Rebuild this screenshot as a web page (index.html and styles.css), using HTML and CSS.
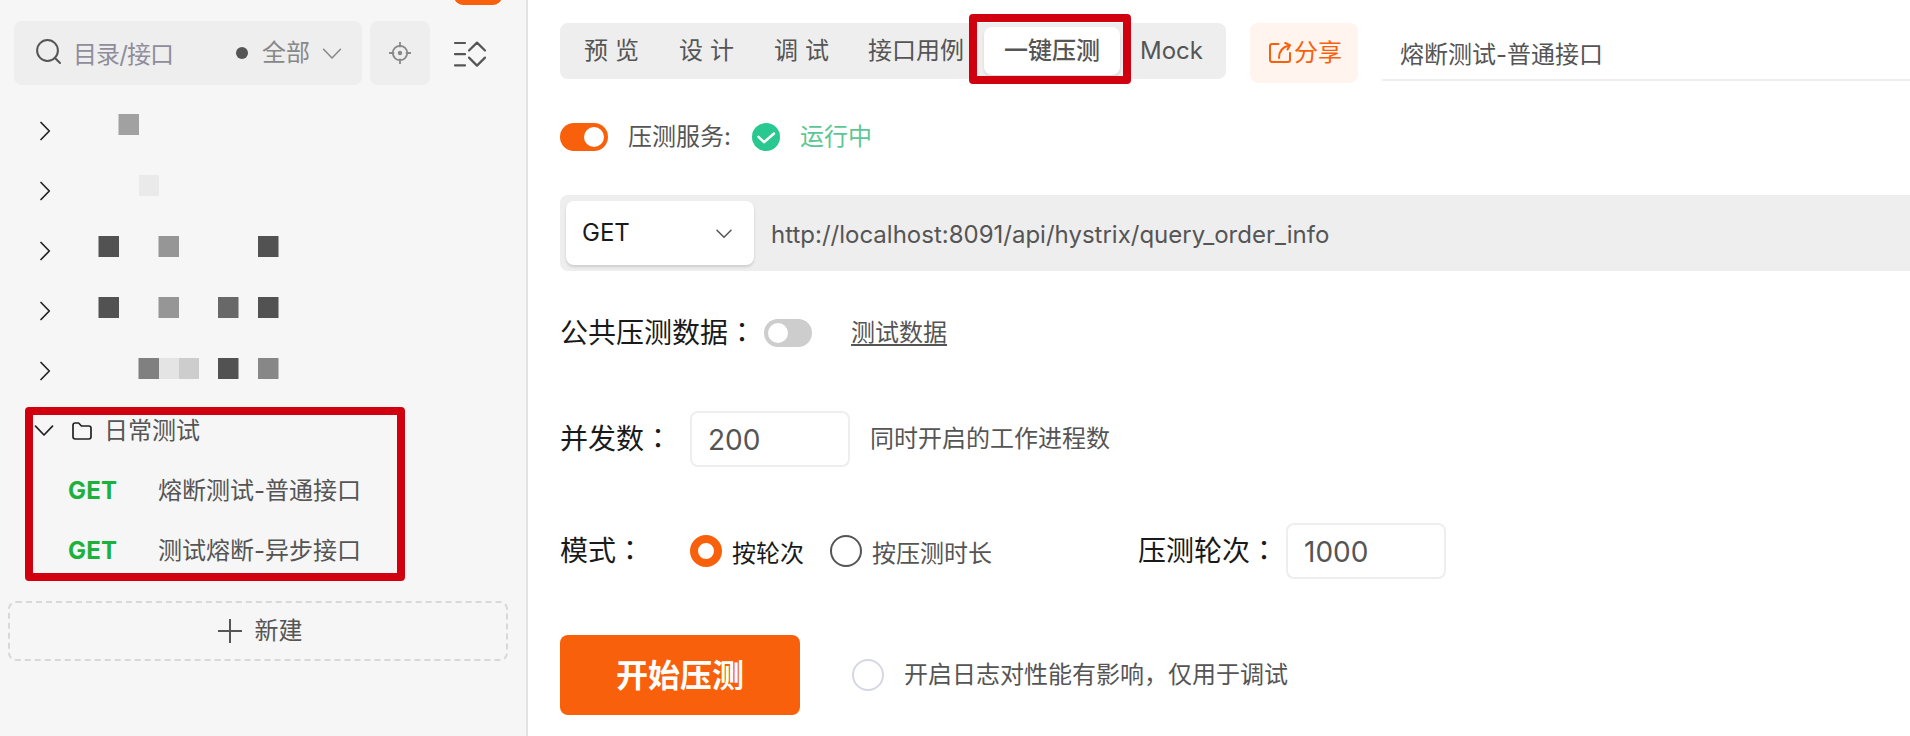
FILE: index.html
```html
<!DOCTYPE html>
<html lang="zh-CN">
<head>
<meta charset="utf-8">
<title>一键压测</title>
<link rel="stylesheet" href="styles.css">
</head>
<body>
<div class="app">
  <aside class="sidebar">
    <span class="top-tab"></span>
    <div class="toolbar">
      <div class="search">
        <svg class="search-icon" width="26" height="26" viewBox="0 0 26 26"><circle cx="11.5" cy="11.5" r="10.4"/><path d="M18.7 18.7 24 24"/></svg>
        <span class="search-hint">目录/接口</span>
        <span class="dot"></span>
        <span class="filter">全部</span>
        <svg class="filter-arrow" width="20" height="12" viewBox="0 0 20 12"><path d="M1.5 1.2 10 10 18.5 1.2"/></svg>
      </div>
      <div class="locate">
        <svg width="22" height="22" viewBox="0 0 22 22"><circle cx="11" cy="11" r="7.2"/><path d="M11 .5v4M11 17.5v4M.5 11h4M17.5 11h4"/><circle class="fill" cx="11" cy="11" r="2.2"/></svg>
      </div>
      <svg class="expand" width="34" height="28" viewBox="0 0 34 28"><path d="M2 3h10M2 14.2h10M2 25.4h10M16 10.5 24 2.6l8 7.9M16 17.6l8 8 8-8"/></svg>
    </div>
    <div class="tree">
      <div class="node"><svg class="caret" width="12" height="20" viewBox="0 0 12 20"><path d="M2 1.5 10.3 10 2 18.5"/></svg></div>
      <div class="node"><svg class="caret" width="12" height="20" viewBox="0 0 12 20"><path d="M2 1.5 10.3 10 2 18.5"/></svg></div>
      <div class="node"><svg class="caret" width="12" height="20" viewBox="0 0 12 20"><path d="M2 1.5 10.3 10 2 18.5"/></svg></div>
      <div class="node"><svg class="caret" width="12" height="20" viewBox="0 0 12 20"><path d="M2 1.5 10.3 10 2 18.5"/></svg></div>
      <div class="node"><svg class="caret" width="12" height="20" viewBox="0 0 12 20"><path d="M2 1.5 10.3 10 2 18.5"/></svg></div>
      <svg class="mosaic" width="182" height="266" viewBox="0 0 182 266">
        <rect x="20.5" y="0" width="20.5" height="21" fill="#a1a1a1"/>
        <rect x="41" y="61" width="20" height="21" fill="#eaeaea"/>
        <rect x="0.5" y="122" width="20.5" height="21" fill="#525252"/>
        <rect x="60.5" y="122" width="20.5" height="21" fill="#969696"/>
        <rect x="160" y="122" width="20.5" height="21" fill="#525252"/>
        <rect x="0.5" y="183" width="20.5" height="21" fill="#525252"/>
        <rect x="60.5" y="183" width="20.5" height="21" fill="#969696"/>
        <rect x="120" y="183" width="20.5" height="21" fill="#686868"/>
        <rect x="160" y="183" width="20.5" height="21" fill="#525252"/>
        <rect x="40.5" y="244" width="20.5" height="21" fill="#808080"/>
        <rect x="61" y="244" width="20" height="21" fill="#e4e4e4"/>
        <rect x="81" y="244" width="20" height="21" fill="#cdcdcd"/>
        <rect x="120" y="244" width="20.5" height="21" fill="#525252"/>
        <rect x="160" y="244" width="20.5" height="21" fill="#878787"/>
      </svg>
      <div class="node folder">
        <svg width="20" height="12" viewBox="0 0 20 12"><path d="M1.5 1.2 10 10 18.5 1.2"/></svg>
        <svg class="folder-icon" width="20" height="18" viewBox="0 0 20 18"><path d="M1 3.2Q1 1 3.2 1H6.6L9.4 4H16.8Q19 4 19 6.2V14.8Q19 17 16.8 17H3.2Q1 17 1 14.8Z"/></svg>
        <span>日常测试</span>
      </div>
      <div class="node api"><b class="verb">GET</b><span>熔断测试-普通接口</span></div>
      <div class="node api"><b class="verb">GET</b><span>测试熔断-异步接口</span></div>
      <span class="mark mark-tree"></span>
    </div>
    <div class="create">
      <svg width="24" height="24" viewBox="0 0 24 24"><path d="M12 0v24M0 12h24"/></svg>
      <span>新建</span>
    </div>
  </aside>

  <main class="main">
    <header class="head">
      <nav class="tabs">
        <span class="tab spaced">预览</span>
        <span class="tab spaced">设计</span>
        <span class="tab spaced">调试</span>
        <span class="tab cases">接口用例</span>
        <span class="tab active">一键压测<i class="mark mark-tab"></i></span>
        <span class="tab">Mock</span>
      </nav>
      <div class="share">
        <svg width="24" height="22" viewBox="0 0 24 22"><path d="M10.5 2H4.2Q2 2 2 4.2V17.8Q2 20 4.2 20H20Q22 20 22 17.8V11"/><path d="M11 16C11 9 14.5 5 21 3.5M17.2 1 22 3.2 19.5 7.5"/></svg>
        <span>分享</span>
      </div>
      <div class="title">熔断测试-普通接口</div>
    </header>

    <div class="service">
      <span class="switch on"></span>
      <span class="service-label">压测服务:</span>
      <svg width="28" height="28" viewBox="0 0 28 28"><circle cx="14" cy="14" r="14"/><path d="M6.5 13.8 12 19.2 22 10.5"/></svg>
      <span class="running">运行中</span>
    </div>

    <div class="urlbar">
      <div class="method"><span>GET</span><svg width="16" height="10" viewBox="0 0 16 10"><path d="M1 1.2 8 8.2 15 1.2"/></svg></div>
      <span class="url">http://localhost:8091/api/hystrix/query_order_info</span>
    </div>

    <div class="row data">
      <span class="label">公共压测数据<span class="colon" lang="zh-TW">：</span></span>
      <span class="switch"></span>
      <a class="link">测试数据</a>
    </div>

    <div class="row workers">
      <span class="label fixed">并发数<span class="colon" lang="zh-TW">：</span></span>
      <span class="input">200</span>
      <span class="hint">同时开启的工作进程数</span>
    </div>

    <div class="row mode">
      <span class="label fixed">模式<span class="colon" lang="zh-TW">：</span></span>
      <span class="radio checked"></span><span class="option chosen">按轮次</span>
      <span class="radio"></span><span class="option">按压测时长</span>
      <span class="label rounds">压测轮次<span class="colon" lang="zh-TW">：</span></span>
      <span class="input">1000</span>
    </div>

    <div class="row run">
      <span class="start">开始压测</span>
      <span class="radio pale"></span>
      <span class="note">开启日志对性能有影响，仅用于调试</span>
    </div>
  </main>
</div>
</body>
</html>
```
FILE: styles.css
```css
* { box-sizing: border-box; }
body {
  margin: 0;
  font-family: Inter, "Noto Sans CJK SC", sans-serif;
  font-size: 24px;
  line-height: 36px;
  color: #555;
  background: #fff;
}
svg { display: block; flex: none; fill: none; stroke: #555; stroke-width: 2; stroke-linecap: round; stroke-linejoin: round; }
span, a { white-space: nowrap; }
.app { display: flex; width: 1910px; height: 736px; overflow: hidden; }

.sidebar { position: relative; flex: none; width: 528px; background: #f6f6f6; border-right: 2px solid #e2e2e2; }
.top-tab { position: absolute; left: 454px; top: -20px; width: 48px; height: 25px; border-radius: 9px; background: #f8600b; }
.toolbar { display: flex; align-items: center; padding: 21px 0 0 14px; }
.search { display: flex; align-items: center; width: 348px; height: 64px; padding-left: 22px; border-radius: 8px; background: #eee; }
.search-icon { margin-top: -2px; }
.search-hint { width: 162px; margin: 4px 0 0 11px; color: #8f8d9b; letter-spacing: -0.9px; }
.dot { width: 12px; height: 12px; margin-left: 1px; border-radius: 50%; background: #555; }
.filter { margin: 0 12px 0 14px; color: #888; }
.filter-arrow { margin-top: 2px; stroke: #888; stroke-width: 1.5; }
.locate { display: flex; align-items: center; justify-content: center; width: 60px; height: 64px; margin-left: 8px; border-radius: 8px; background: #eee; }
.locate svg { stroke: #888; stroke-width: 1.8; }
.locate .fill { fill: #888; stroke: none; }
.expand { margin: 2px 0 0 23px; stroke-width: 2.2; }

.tree { position: relative; padding-top: 16px; }
.node { display: flex; align-items: center; height: 60px; padding-left: 39px; }
.node svg { stroke: #222; stroke-width: 1.7; }
.mosaic { position: absolute; left: 98px; top: 29px; stroke: none; }
.folder { padding-left: 34px; }
.folder .folder-icon { margin: 0 12px 0 18px; }
.api { padding-left: 68px; }
.verb { width: 90px; color: #1bb13c; letter-spacing: 0.2px; }
.mark { position: absolute; border: 8px solid #d0000f; border-radius: 4px; }
.mark-tree { left: 25px; top: 322px; width: 380px; height: 174px; }
.create { display: flex; align-items: center; justify-content: center; gap: 13px; width: 500px; height: 60px; margin: 20px 0 0 8px; padding-left: 4px; border: 2px dashed #d8d8d8; border-radius: 8px; }
.create svg { stroke-linecap: butt; }

.main { flex: 1; min-width: 0; padding: 23px 0 0 32px; }
.head { display: flex; align-items: flex-start; height: 60px; }
.tabs { display: flex; width: 666px; height: 56px; padding: 4px; border-radius: 8px; background: #eee; }
.tab { flex: none; padding: 6px 20px; }
.tab.spaced { width: 95px; letter-spacing: 7px; }
.tab.cases { margin-left: -1px; }
.tab.active { position: relative; font-weight: 500; border-radius: 8px; background: #fff; box-shadow: 0 2px 3px rgba(0,0,0,.1); }
.mark-tab { left: -15px; top: -13px; width: 162px; height: 70px; }
.share { display: flex; align-items: center; justify-content: center; gap: 2px; width: 108px; height: 60px; margin-left: 24px; padding-left: 2px; border-radius: 8px; color: #f8600b; background: #fff5ee; }
.share svg { stroke: #f8600b; }
.title { flex: 1; height: 58px; margin-left: 24px; padding: 14px 0 0 18px; border-bottom: 2px solid #eee; }

.service { display: flex; align-items: center; height: 28px; margin-top: 40px; }
.switch { flex: none; width: 48px; height: 28px; padding: 4px; border-radius: 14px; background: #cdcdcd; }
.switch::after { content: ""; display: block; width: 20px; height: 20px; border-radius: 50%; background: #fff; }
.switch.on { background: #f8600b; }
.switch.on::after { margin-left: 20px; }
.service-label { width: 124px; margin-left: 20px; }
.service svg { stroke: #fff; stroke-width: 2.5; }
.service circle { fill: #28c890; stroke: none; }
.running { margin-left: 20px; color: #5cc794; }

.urlbar { display: flex; align-items: center; height: 76px; margin-top: 44px; padding-left: 6px; border-radius: 8px 0 0 8px; background: #eee; }
.method { display: flex; align-items: center; justify-content: space-between; width: 188px; height: 64px; padding: 0 22px 0 16px; color: #1a1a1a; border-radius: 8px; background: #fff; box-shadow: 0 2px 3px rgba(0,0,0,.14); }
.method svg { margin-top: 1px; stroke-width: 1.5; }
.url { margin: 4px 0 0 17px; }

.row { display: flex; align-items: center; }
.label { font-size: 28px; color: #1a1a1a; }
.fixed { width: 130px; }
.colon { font-family: "Noto Sans CJK TC", sans-serif; line-height: 1; }
.data { height: 60px; margin-top: 32px; }
.data .switch { margin-left: 8px; }
.link { margin-left: 39px; text-decoration: underline; text-decoration-thickness: 2px; text-underline-offset: 3px; text-decoration-skip-ink: none; }
.input { width: 160px; height: 56px; padding: 9px 0 0 16px; font-size: 28px; border: 2px solid #eee; border-radius: 8px; }
.workers { height: 56px; margin-top: 48px; }
.hint { margin-left: 20px; }
.mode { height: 56px; margin-top: 56px; }
.radio { flex: none; width: 32px; height: 32px; border: 2px solid #555; border-radius: 50%; }
.radio.checked { border: 8px solid #f8600b; }
.radio.pale { margin-left: 52px; border-color: #d5d8e1; }
.option { margin: 6px 0 0 10px; }
.chosen { width: 98px; color: #1a1a1a; }
.rounds { width: 148px; margin-left: 146px; }
.run { height: 80px; margin-top: 56px; }
.start { width: 240px; height: 80px; font-size: 32px; font-weight: 700; line-height: 82px; text-align: center; color: #fff; border-radius: 8px; background: #f8600b; }
.note { margin-left: 20px; }
```
